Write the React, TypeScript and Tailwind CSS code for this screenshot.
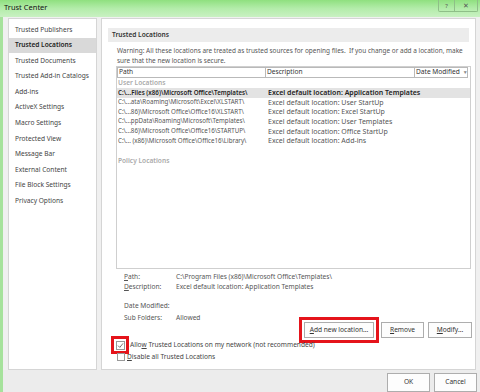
import React from 'react';

const navItems = [
  'Trusted Publishers',
  'Trusted Locations',
  'Trusted Documents',
  'Trusted Add-in Catalogs',
  'Add-ins',
  'ActiveX Settings',
  'Macro Settings',
  'Protected View',
  'Message Bar',
  'External Content',
  'File Block Settings',
  'Privacy Options',
];

const userLocations = [
  ['C:\\...Files (x86)\\Microsoft Office\\Templates\\', 'Excel default location: Application Templates'],
  ['C:\\...ata\\Roaming\\Microsoft\\Excel\\XLSTART\\', 'Excel default location: User StartUp'],
  ['C:\\...86)\\Microsoft Office\\Office16\\XLSTART\\', 'Excel default location: Excel StartUp'],
  ['C:\\...ppData\\Roaming\\Microsoft\\Templates\\', 'Excel default location: User Templates'],
  ['C:\\...86)\\Microsoft Office\\Office16\\STARTUP\\', 'Excel default location: Office StartUp'],
  ['C:\\... (x86)\\Microsoft Office\\Office16\\Library\\', 'Excel default location: Add-ins'],
];

function Check() {
  return (
    <svg width="7" height="7" viewBox="0 0 7 7" fill="none">
      <path d="M1 3.6 L2.8 5.4 L6 1.4" stroke="#666" strokeWidth="0.9" />
    </svg>
  );
}

function Btn({ children, className = '' }: { children: React.ReactNode; className?: string }) {
  return (
    <div
      className={`flex items-center justify-center bg-[#fdfdfd] border border-[#adadad] text-[#333] whitespace-nowrap ${className}`}
    >
      {children}
    </div>
  );
}

export default function App() {
  return (
    <div
      className="w-[480px] h-[392px] overflow-hidden flex flex-col bg-[#f0f0f0] text-[6.6px] leading-none text-[#444]"
      style={{ fontFamily: '"Noto Sans", "Open Sans", sans-serif' }}
    >
      {/* title bar */}
      <div className="h-[17px] shrink-0 flex items-start justify-between bg-gradient-to-b from-[#8fe07f] via-[#b3ecaa] to-[#c9f1c2]">
        <div className="pl-[4px] pt-[4px] text-[7.5px] text-[#111]">Trust Center</div>
        <div className="flex pr-[2px]">
          <div className="w-[17px] h-[12px] border border-t-0 border-[#8fbf88] rounded-bl-[2px] flex items-center justify-center text-[6px] text-[#555]">
            ?
          </div>
          <div className="w-[23px] h-[12px] border border-t-0 border-l-0 border-[#8fbf88] rounded-br-[2px] flex items-center justify-center text-[7px] text-[#555]">
            ✕
          </div>
        </div>
      </div>

      <div className="flex-1 flex flex-col border-l-[3px] border-[#a6e29c]">
        {/* panels */}
        <div className="flex gap-[4px] pl-[5px] pt-[1px] h-[353px] shrink-0">
          {/* nav */}
          <div className="w-[89px] bg-white border border-[#d5d5d5] pt-[3px]">
            {navItems.map((item, i) => (
              <div
                key={item}
                className={`h-[15.6px] flex items-center pl-[6px] whitespace-nowrap ${
                  i === 1 ? 'bg-[#d9d9d9] text-[#222] font-semibold' : ''
                }`}
              >
                {item}
              </div>
            ))}
          </div>

          {/* content */}
          <div className="w-[375px] bg-white border border-[#d5d5d5] flex flex-col">
            <div className="mt-[9px] mx-[6px] h-[14px] shrink-0 bg-[#ececec] flex items-center pl-[4px] text-[#333] font-semibold">
              Trusted Locations
            </div>
            <div className="pl-[15px] pt-[4px] leading-[10px] text-[#555] text-[6.45px] whitespace-nowrap">
              <div>
                Warning: All these locations are treated as trusted sources for opening files.&nbsp; If you change or add a
                location, make
              </div>
              <div>sure that the new location is secure.</div>
            </div>

            {/* list */}
            <div className="ml-[14px] w-[355px] h-[203px] shrink-0 border border-[#cfcfcf] flex flex-col">
              <div className="flex h-[11px] text-[#333] whitespace-nowrap">
                <div className="w-[149px] border border-[#b9b9b9] flex items-center pl-[1px]">Path</div>
                <div className="w-[149px] border border-l-0 border-[#b9b9b9] flex items-center pl-[1px]">Description</div>
                <div className="w-[53px] border border-l-0 border-[#b9b9b9] flex items-center pl-[1px] gap-[3px]">
                  Date Modified <span className="text-[5px] text-[#888]">▼</span>
                </div>
              </div>
              <div className="pl-[1px] mt-[1px] h-[9px] flex items-center text-[#aaa] font-semibold">User Locations</div>
              {userLocations.map(([path, desc], i) => (
                <div
                  key={path}
                  className={`h-[9.6px] flex items-center whitespace-nowrap ${
                    i === 0 ? 'bg-[#e3e3e3] text-[#222] font-semibold' : 'text-[#555]'
                  }`}
                >
                  <div className="w-[150px] pl-[1px] text-[6.2px]">{path}</div>
                  <div className="pl-[1px] text-[7px]">{desc}</div>
                </div>
              ))}
              <div className="mt-[12px] pl-[1px] text-[#aaa] font-semibold">Policy Locations</div>
            </div>

            {/* details */}
            <div className="pl-[22px] pt-[3px] text-[#555] leading-[10px] whitespace-nowrap">
              <div className="flex">
                <div className="w-[52px]">
                  <span className="underline">P</span>ath:
                </div>
                <div>C:\Program Files (x86)\Microsoft Office\Templates\</div>
              </div>
              <div className="flex">
                <div className="w-[52px]">
                  <span className="underline">D</span>escription:
                </div>
                <div>Excel default location: Application Templates</div>
              </div>
              <div className="flex mt-[9px]">
                <div className="w-[52px]">Date Modified:</div>
              </div>
              <div className="flex mt-[2px]">
                <div className="w-[52px]">Sub Folders:</div>
                <div>Allowed</div>
              </div>
            </div>

            {/* buttons */}
            <div className="flex justify-end items-center pr-[3px] -mt-[6px]">
              <div className="border-[3px] border-[#e5141b] p-[2px]">
                <Btn className="w-[70px] h-[16px]">
                  <span>
                    <span className="underline">A</span>dd new location...
                  </span>
                </Btn>
              </div>
              <Btn className="w-[43px] h-[16px] ml-[2px]">
                <span>
                  <span className="underline">R</span>emove
                </span>
              </Btn>
              <Btn className="w-[44px] h-[16px] ml-[4px]">
                <span>
                  <span className="underline">M</span>odify...
                </span>
              </Btn>
            </div>

            {/* checkboxes */}
            <div className="pl-[9px] -mt-[7px] text-[#444] whitespace-nowrap">
              <div className="flex items-center">
                <div className="border-[3px] border-[#e5141b] p-[1.5px]">
                  <div className="w-[9px] h-[9px] border border-[#999] bg-white flex items-center justify-center">
                    <Check />
                  </div>
                </div>
                <span className="ml-[1px]">
                  Allo<span className="underline">w</span> Trusted Locations on my network (not recommended)
                </span>
              </div>
              <div className="flex items-center pl-[6px] -mt-[1px]">
                <div className="w-[8px] h-[8px] border border-[#999] bg-white" />
                <span className="ml-[2px]">
                  <span className="underline">D</span>isable all Trusted Locations
                </span>
              </div>
            </div>
          </div>
        </div>

        {/* footer */}
        <div className="flex-1 flex justify-end items-start pt-[3px] pr-[3px] gap-[4px] bg-[#ececec]">
          <Btn className="w-[43px] h-[19px]">OK</Btn>
          <Btn className="w-[43px] h-[19px]">Cancel</Btn>
        </div>
      </div>
    </div>
  );
}
